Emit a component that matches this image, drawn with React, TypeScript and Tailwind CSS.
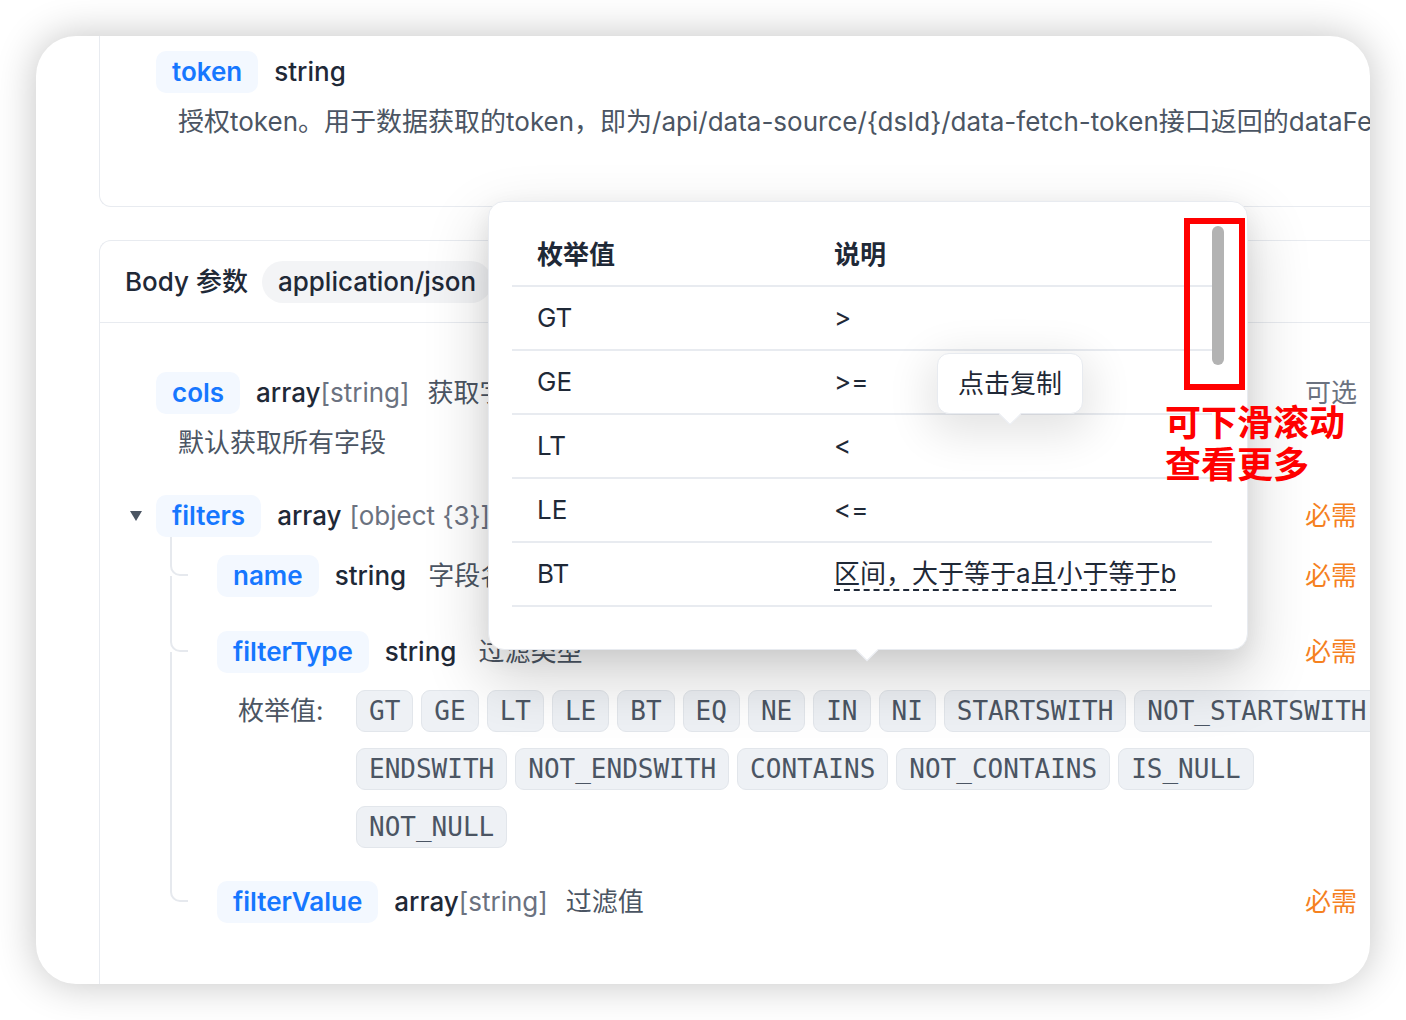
import React from "react";

const enumValues = [
  "GT", "GE", "LT", "LE", "BT", "EQ", "NE", "IN", "NI", "STARTSWITH", "NOT_STARTSWITH",
  "ENDSWITH", "NOT_ENDSWITH", "CONTAINS", "NOT_CONTAINS", "IS_NULL", "NOT_NULL",
];

const enumRows: [string, string][] = [
  ["GT", ">"],
  ["GE", ">="],
  ["LT", "<"],
  ["LE", "<="],
  ["BT", "区间，大于等于a且小于等于b"],
];

function Name({ children }: { children: React.ReactNode }) {
  return (
    <span className="inline-flex h-[42px] shrink-0 items-center rounded-[10px] bg-[#f3f8ff] px-4 font-semibold text-[#1677ff]">
      {children}
    </span>
  );
}

function Type({ main, sub, space }: { main: string; sub?: string; space?: boolean }) {
  return (
    <span className="shrink-0 whitespace-nowrap">
      <span className="font-medium text-[#1f2937]">{main}</span>
      {sub && <span className={`text-[#6b7280] ${space ? "ml-[8px]" : ""}`}>{sub}</span>}
    </span>
  );
}

function Required() {
  return <span className="shrink-0 text-[#f5811f]">必需</span>;
}

function Elbow({ h, last }: { h: string; last?: boolean }) {
  return (
    <div className="flex w-[18px] shrink-0 flex-col">
      <div className={`${h} rounded-bl-[10px] border-b-2 border-l-2 border-[#e6e9ee]`} />
      {!last && <div className="flex-1 border-l-2 border-[#e6e9ee]" />}
    </div>
  );
}

export default function App() {
  return (
    <div className="h-[1020px] w-[1406px] bg-white p-[36px] font-['Inter','Noto_Sans_CJK_SC',sans-serif] text-[26px] leading-[36px] [font-feature-settings:'calt'_0]">
      <div className="relative h-[948px] overflow-hidden rounded-[40px] bg-white shadow-[0_0_40px_rgba(0,0,0,0.24)]">
        <div className="pl-[63px]">
          {/* previous section, cut off at the top */}
          <div className="flex h-[171px] w-[1291px] flex-col rounded-bl-[12px] border-b border-l border-[#e8ebf0] pl-[56px] pt-[15px]">
            <div className="flex items-center gap-4">
              <Name>token</Name>
              <Type main="string" />
            </div>
            <p className="mt-[11px] whitespace-nowrap pl-[22px] text-[#4b5563]">
              授权token。用于数据获取的token，即为/api/data-source/{"{dsId}"}/data-fetch-token接口返回的dataFetchToken
            </p>
          </div>

          {/* Body params */}
          <div className="mt-[33px] w-[1291px] rounded-tl-[12px] border-l border-t border-[#e8ebf0] pb-[120px]">
            <div className="flex h-[82px] items-center gap-[14px] border-b border-[#e8ebf0] pl-[25px]">
              <span className="font-medium text-[#1f2937]">Body 参数</span>
              <span className="inline-flex h-[42px] items-center rounded-full bg-[#f3f4f6] px-4 font-medium text-[#1f2937]">
                application/json
              </span>
            </div>

            <div className="pr-[33px] pt-[49px]">
              <div className="flex items-center justify-between pl-[56px]">
                <div className="flex items-center gap-4">
                  <Name>cols</Name>
                  <Type main="array" sub="[string]" />
                  <span className="ml-[2px] text-[#4b5563]">获取字段列表</span>
                </div>
                <span className="text-[#6b7280]">可选</span>
              </div>
              <p className="mt-[11px] pl-[78px] text-[#4b5563]">默认获取所有字段</p>

              <div className="mt-[34px] flex items-center justify-between pl-[30px]">
                <div className="flex items-center">
                  <svg width="12" height="10" viewBox="0 0 12 10" className="mr-[14px] shrink-0">
                    <path d="M0 0 L12 0 L6 10 Z" fill="#4b5563" />
                  </svg>
                  <Name>filters</Name>
                  <span className="ml-4">
                    <Type main="array" sub="[object {3}]" space />
                  </span>
                </div>
                <Required />
              </div>

              <div className="ml-[70px] flex flex-col">
                <div className="flex">
                  <Elbow h="h-[39px]" />
                  <div className="ml-[29px] min-w-0 flex-1 pt-[18px]">
                    <div className="flex items-center justify-between">
                      <div className="flex items-center gap-4">
                        <Name>name</Name>
                        <Type main="string" />
                        <span className="ml-[6px] text-[#4b5563]">字段名</span>
                      </div>
                      <Required />
                    </div>
                  </div>
                </div>

                <div className="flex">
                  <Elbow h="h-[55px]" />
                  <div className="ml-[29px] min-w-0 flex-1 pt-[34px]">
                    <div className="flex items-center justify-between">
                      <div className="flex items-center gap-4">
                        <Name>filterType</Name>
                        <Type main="string" />
                        <span className="ml-[6px] text-[#4b5563]">过滤类型</span>
                      </div>
                      <Required />
                    </div>
                    <div className="mt-[17px] flex pl-[21px]">
                      <span className="w-[118px] shrink-0 leading-[42px] text-[#4b5563]">枚举值:</span>
                      <div className="flex w-[1040px] shrink-0 flex-wrap gap-x-2 gap-y-4">
                        {enumValues.map((v) => (
                          <span
                            key={v}
                            className="inline-flex h-[42px] items-center rounded-[9px] border border-[#e2e6eb] bg-[#eef1f5] px-3 font-['DejaVu_Sans_Mono',monospace] text-[26px] text-[#4b5563]"
                          >
                            {v}
                          </span>
                        ))}
                      </div>
                    </div>
                  </div>
                </div>

                <div className="flex">
                  <Elbow h="h-[54px]" last />
                  <div className="ml-[29px] min-w-0 flex-1 pt-[33px]">
                    <div className="flex items-center justify-between">
                      <div className="flex items-center gap-4">
                        <Name>filterValue</Name>
                        <Type main="array" sub="[string]" />
                        <span className="ml-[2px] text-[#4b5563]">过滤值</span>
                      </div>
                      <Required />
                    </div>
                  </div>
                </div>
              </div>
            </div>
          </div>
        </div>

        {/* enum popover */}
        <div className="absolute left-[452px] top-[165px] h-[449px] w-[760px] rounded-[16px] border border-[#e8ebf0] bg-white pl-[23px] pt-[23px] shadow-[0_26px_60px_6px_rgba(0,0,0,0.16),0_8px_24px_rgba(0,0,0,0.07)]">
          <div className="w-[700px] text-[#1f2937]">
            <div className="grid h-[62px] grid-cols-[297px_1fr] items-center border-b-2 border-[#e8ebf0] pl-[25px] font-semibold">
              <span>枚举值</span>
              <span>说明</span>
            </div>
            {enumRows.map(([k, d]) => (
              <div key={k} className="grid h-[64px] grid-cols-[297px_1fr] items-center border-b-2 border-[#e8ebf0] pl-[25px]">
                <span>{k}</span>
                <span className={k === "BT" ? "whitespace-nowrap underline decoration-dashed decoration-[1.5px] underline-offset-[6px]" : ""}>
                  {d}
                </span>
              </div>
            ))}
          </div>
          {/* scrollbar thumb */}
          <div className="absolute left-[723px] top-[24px] h-[139px] w-[12px] rounded-full bg-[#b3b3b3]" />
          {/* arrow */}
          <div className="absolute -bottom-[9px] left-[370px] h-[16px] w-[16px] rotate-45 border-b border-r border-[#e8ebf0] bg-white" />
        </div>

        {/* copy tooltip */}
        <div className="absolute left-[901px] top-[317px] flex h-[61px] w-[146px] items-center justify-center rounded-[12px] border border-[#e8ebf0] bg-white text-[#1f2937] shadow-[0_12px_44px_8px_rgba(0,0,0,0.11)]">
          点击复制
          <div className="absolute -bottom-[9px] left-[64px] h-[16px] w-[16px] rotate-45 border-b border-r border-[#e8ebf0] bg-white" />
        </div>

        {/* annotation */}
        <div className="absolute left-[1148px] top-[182px] h-[172px] w-[61px] border-[6px] border-[#ff0000]" />
        <div className="absolute left-[1129px] top-[363px] font-['Noto_Sans_CJK_SC',sans-serif] text-[36px] font-bold leading-[42px] text-[#ff0000]">
          <div>可下滑滚动</div>
          <div>查看更多</div>
        </div>
      </div>
    </div>
  );
}
